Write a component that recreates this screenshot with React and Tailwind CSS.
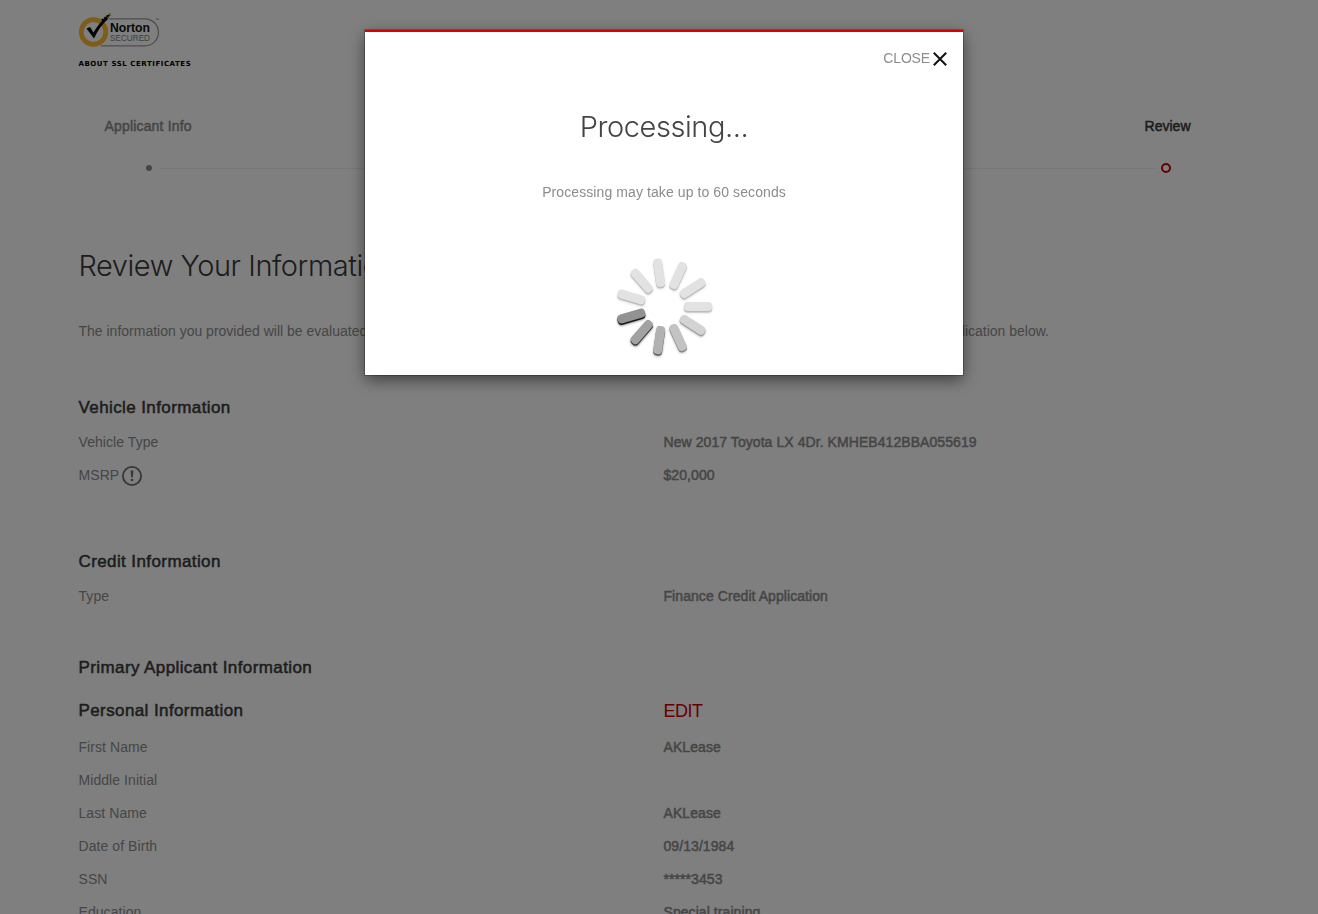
const BARS = [
  ["#e2e2e2", "#bdbdbd"],
  ["#d3d3d3", "#a0a0a0"],
  ["#c3c3c3", "#858585"],
  ["#b2b2b2", "#5e5e5e"],
  ["#a2a2a2", "#3c3c3c"],
  ["#929292", "#151515"],
  ["#e2e2e2", "#bdbdbd"],
  ["#e2e2e2", "#bdbdbd"],
  ["#e2e2e2", "#bdbdbd"],
  ["#e2e2e2", "#bdbdbd"],
  ["#e2e2e2", "#bdbdbd"],
];

function Spinner() {
  return (
    <svg width="104" height="104" viewBox="-52 -52 104 104" className="block">
      <defs>
        <filter id="soft" x="-20%" y="-20%" width="140%" height="140%">
          <feGaussianBlur stdDeviation="1" />
        </filter>
      </defs>
      {BARS.map(([fill, edge], i) => {
        const bar = (dy, color, extra) => (
          <g transform={`translate(0 ${dy})`} {...extra}>
            <rect x="19.800" y="-4.500" width="28.400" height="9" rx="4" fill={color} transform={`rotate(${(i * 360) / 11})`} />
          </g>
        );
        return (
          <g key={i}>
            {bar(1.8, edge, { filter: "url(#soft)", opacity: 0.5 })}
            {bar(0.9, edge)}
            {bar(-0.6, fill)}
          </g>
        );
      })}
    </svg>
  );
}

function NortonLogo() {
  return (
    <svg width="84" height="36" viewBox="0 0 84 36" className="block">
      <path d="M30 5.800H66A13.500 13.500 0 0 1 66 32.800H22" fill="none" stroke="#999" strokeWidth="1.200" />
      <circle cx="14.500" cy="19" r="12.300" fill="#fff" stroke="#fdbb30" strokeWidth="4.800" />
      <path d="M7.500 15.500L11 14L14.500 19.500Q20 10 27 4L30.500 1L29 6Q20 14 15 25.500Z" fill="#000" />
      <path d="M23 7.500L31 1.500" stroke="#000" strokeWidth="2.500" strokeDasharray="2 1" />
      <path d="M29 1.500L32 0.500M28 5L31 3" stroke="#fdbb30" strokeWidth="1" />
      <text x="31" y="18.800" fontFamily="Liberation Sans, sans-serif" fontWeight="700" fontSize="13" textLength="40" lengthAdjust="spacingAndGlyphs" fill="#111">Norton</text>
      <text x="31" y="28.300" fontFamily="Liberation Sans, sans-serif" fontSize="8.300" textLength="40" lengthAdjust="spacingAndGlyphs" fill="#808080">SECURED</text>
      <text x="76" y="8" fontFamily="Liberation Sans, sans-serif" fontSize="4" fill="#555">™</text>
    </svg>
  );
}

function Row({ label, value, children }) {
  return (
    <div className="grid h-[33px] grid-cols-[585px_1fr] text-[14px] leading-[20px] text-[#8c8c8c]">
      <div className="flex items-start gap-[3px] tracking-[0.07px]">{label}{children}</div>
      <div className="tracking-[0.07px] [-webkit-text-stroke:0.5px_#8c8c8c]">{value}</div>
    </div>
  );
}

function Heading({ children }) {
  return <h2 className="text-[17px] leading-[22px] tracking-[0.4px] text-[#3a3a3a] [-webkit-text-stroke:0.5px_#3a3a3a]">{children}</h2>;
}

export default function App() {
  return (
    <div className="h-[914px] overflow-hidden bg-white font-['Liberation_Sans',Arial,sans-serif]">
      <main className="flex flex-col pl-[78.500px] pt-[13px]">
        <NortonLogo />
        <div className="mt-[10px] font-['DejaVu_Sans',sans-serif] text-[7px] font-bold leading-[10px] tracking-[0.55px] text-black">ABOUT SSL CERTIFICATES</div>

        <nav className="mt-[47px] flex h-[70px] w-[1140px] flex-col">
          <div className="flex justify-between pl-[26px] pr-[28px] text-[14px] leading-[20px]">
            <span className="tracking-[0.17px] text-[#8c8c8c] [-webkit-text-stroke:0.5px_#8c8c8c]">Applicant Info</span>
            <span className="text-[#3a3a3a] [-webkit-text-stroke:0.5px_#3a3a3a]">Review</span>
          </div>
          <div className="mt-[27px] flex h-[10px] items-center pl-[67px]">
            <span className="size-[6px] rounded-full bg-[#8a8a8a]" />
            <span className="ml-[7px] h-px w-[999px] bg-[#f0f0f0]" />
            <span className="ml-[3px] size-[10px] rounded-full border-2 border-[#cc0000]" />
          </div>
        </nav>

        <h1 className="mt-[60px] font-['Inter',sans-serif] text-[29px] font-light leading-[40px] tracking-[-0.45px] text-[#3a3a3a]">Review Your Information</h1>
        <p className="mt-[35px] flex w-[970.500px] justify-between text-[14px] leading-[20px] text-[#8c8c8c]">
          <span>The information you provided will be evaluated</span>
          <span>Please review your application below.</span>
        </p>

        <section className="mt-[56px]">
          <Heading>Vehicle Information</Heading>
          <div className="mt-[13px]">
            <Row label="Vehicle Type" value="New 2017 Toyota LX 4Dr. KMHEB412BBA055619" />
            <Row label="MSRP" value="$20,000">
              <svg width="20" height="20" viewBox="0 0 20 20" className="mt-px">
                <circle cx="10" cy="10" r="9.100" fill="none" stroke="#6e6e6e" strokeWidth="1.800" />
                <path d="M8.600 4.500H11.400L10.800 11.500H9.200ZM8.800 13H11.200V15H8.800Z" fill="#6e6e6e" />
              </svg>
            </Row>
          </div>
        </section>
        <section className="mt-[53px]">
          <Heading>Credit Information</Heading>
          <div className="mt-[13px]"><Row label="Type" value="Finance Credit Application" /></div>
        </section>
        <section className="mt-[38px]">
          <Heading>Primary Applicant Information</Heading>
          <div className="mt-[21px] grid grid-cols-[585px_1fr]">
            <Heading>Personal Information</Heading>
            <a className="text-[18px] leading-[22px] tracking-[-0.5px] text-[#cc0000]">EDIT</a>
          </div>
          <div className="mt-[15px]">
            <Row label="First Name" value="AKLease" />
            <Row label="Middle Initial" />
            <Row label="Last Name" value="AKLease" />
            <Row label="Date of Birth" value="09/13/1984" />
            <Row label="SSN" value="*****3453" />
            <Row label="Education" value="Special training" />
          </div>
        </section>
      </main>

      <div className="fixed inset-0 flex items-start justify-center bg-black/50 pl-[10px] pt-[30px]">
        <div role="dialog" className="flex h-[345px] w-[598px] flex-col items-center border-t-2 border-[#dd0000] bg-white shadow-[0_5px_15px_rgba(0,0,0,0.5),0_0_0_1px_rgba(0,0,0,0.25)]">
          <div className="mt-4 flex items-center gap-[3px] self-end pr-4 text-[14px] leading-[20px] tracking-[-0.15px] text-[#8c8c8c]">
            <span>CLOSE</span>
            <svg width="14" height="14" viewBox="0 0 14 14" className="mt-0.5"><path d="M0.800 0.800L13.200 13.200M13.200 0.800L0.800 13.200" stroke="#111" strokeWidth="2" /></svg>
          </div>
          <h2 className="mt-[39px] font-['Inter',sans-serif] text-[29px] font-light leading-[40px] tracking-[-0.45px] text-[#444]">Processing...</h2>
          <p className="mt-[35px] text-[14px] leading-[20px] tracking-[0.09px] text-[#8c8c8c]">Processing may take up to 60 seconds</p>
          <div className="mt-[53px]"><Spinner /></div>
        </div>
      </div>
    </div>
  );
}
